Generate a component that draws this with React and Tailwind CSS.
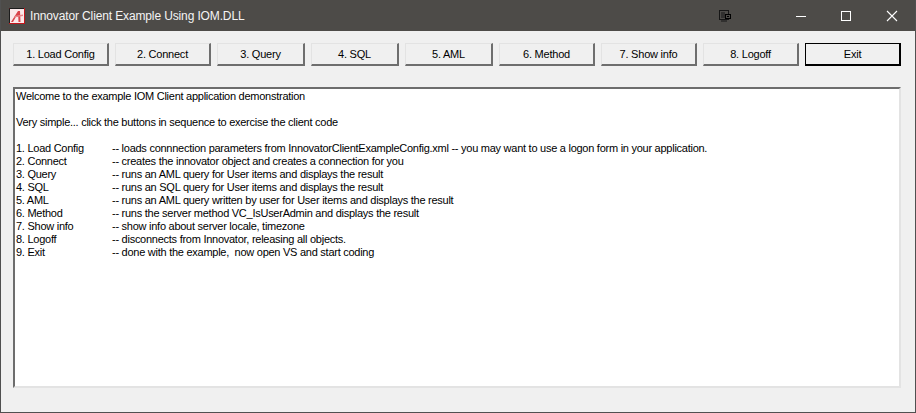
const buttons = [
  ["1. Load Config", "w-24"],
  ["2. Connect", "w-24"],
  ["3. Query", "w-[88px]"],
  ["4. SQL", "w-[88px]"],
  ["5. AML", "w-[88px]"],
  ["6. Method", "w-24"],
  ["7. Show info", "w-24"],
  ["8. Logoff", "w-24"],
];

const rows = [
  ["1. Load Config", "-- loads connnection parameters from InnovatorClientExampleConfig.xml -- you may want to use a logon form in your application."],
  ["2. Connect", "-- creates the innovator object and creates a connection for you"],
  ["3. Query", "-- runs an AML query for User items and displays the result"],
  ["4. SQL", "-- runs an SQL query for User items and displays the result"],
  ["5. AML", "-- runs an AML query written by user for User items and displays the result"],
  ["6. Method", "-- runs the server method VC_IsUserAdmin and displays the result"],
  ["7. Show info", "-- show info about server locale, timezone"],
  ["8. Logoff", "-- disconnects from Innovator, releasing all objects."],
  ["9. Exit", "-- done with the example,  now open VS and start coding"],
];

function Btn({ label, w }) {
  return (
    <button className={`${w} h-[23px] shrink-0 bg-[#f0f0f0] border border-[#e3e3e3] border-r-2 border-b-2 border-r-[#6e6e6e] border-b-[#6e6e6e] text-[11px] tracking-[-0.22px] leading-none text-black`}>
      {label}
    </button>
  );
}

export default function App() {
  return (
    <div className="w-[916px] h-[413px] flex flex-col bg-[#f0f0f0] border border-[#505050] border-t-0 font-['Liberation_Sans',Arial,sans-serif] overflow-hidden">
      <div className="h-[31px] shrink-0 bg-[#4d4b48] flex items-center text-white">
        <svg width="16" height="16" viewBox="0 0 16 16" className="ml-2">
          <rect x="0.5" y="0.5" width="15" height="15" fill="#fbe9ea" stroke="#c4161c" />
          <path d="M15 0.5H0.5V15" fill="none" stroke="#1c1c1c" />
          <path d="M2 14 L9 3 L11 3 L11.5 14 L9.5 14 L9.3 9 L6.8 9 L4 14Z" fill="#d9434a" />
          <path d="M5 8 L14 6.5 L14 8 L5 9.5Z" fill="#e9868a" />
        </svg>
        <span className="ml-[5px] text-[12px] tracking-[-0.13px] text-[#f4f4f4]">Innovator Client Example Using IOM.DLL</span>
        <svg width="12" height="12" viewBox="0 0 12 12" className="ml-auto">
          <rect x="0.5" y="0.5" width="9" height="9" fill="none" stroke="#161616" />
          <path d="M3 2v6M5 2v6" stroke="#161616" />
          <path d="M2 11h6" stroke="#161616" />
          <rect x="6.5" y="4.5" width="5" height="4" fill="#4d4b48" stroke="#000" />
          <rect x="8" y="6" width="2" height="1" fill="#000" />
        </svg>
        <svg width="12" height="12" viewBox="0 0 12 12" className="ml-16">
          <path d="M1 6.5h10" stroke="#fff" />
        </svg>
        <svg width="12" height="12" viewBox="0 0 12 12" className="ml-[33px]">
          <rect x="1.5" y="1.5" width="9" height="9" fill="none" stroke="#fff" />
        </svg>
        <svg width="12" height="12" viewBox="0 0 12 12" className="ml-[34px] mr-[17px]">
          <path d="M1 1l10 10M11 1L1 11" stroke="#fff" strokeWidth="1.1" />
        </svg>
      </div>
      <div className="flex-1 flex flex-col pl-3 pr-[14px] pt-3 pb-[24px] min-h-0">
        <div className="flex gap-1.5 shrink-0">
          {buttons.map(([label, w]) => (
            <Btn key={label} label={label} w={w} />
          ))}
          <button className="w-24 h-[23px] shrink-0 bg-[#f0f0f0] border-2 border-black border-t border-l text-[11px] tracking-[-0.22px] leading-none text-black">
            Exit
          </button>
        </div>
        <div className="mt-[21px] flex-1 bg-white border-2 border-t-[#6d6d6d] border-l-[#6d6d6d] border-r-[#e3e3e3] border-b-[#e3e3e3] pl-px pt-[1px] text-[11px] tracking-[-0.26px] leading-[13px] text-black">
          <p>Welcome to the example IOM Client application demonstration</p>
          <p className="mt-[13px]">Very simple... click the buttons in sequence to exercise the client code</p>
          <div className="mt-[13px]">
            {rows.map(([a, b]) => (
              <div key={a} className="flex whitespace-pre">
                <span className="w-24 shrink-0">{a}</span>
                <span>{b}</span>
              </div>
            ))}
          </div>
        </div>
      </div>
    </div>
  );
}
